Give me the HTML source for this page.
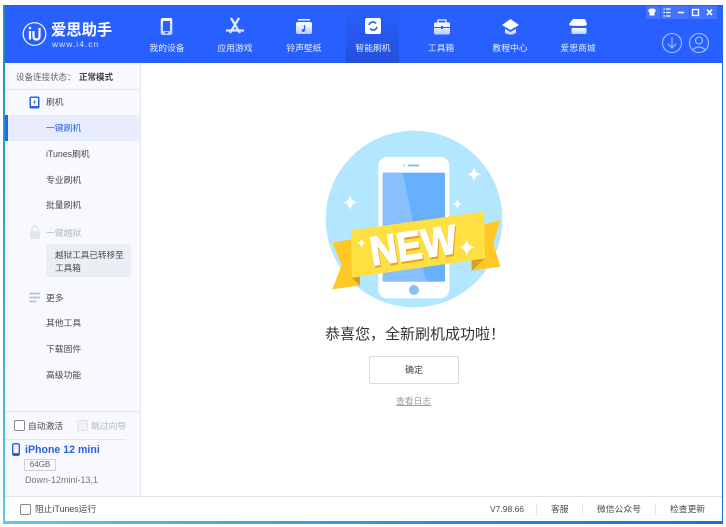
<!DOCTYPE html>
<html lang="zh-CN"><head><meta charset="utf-8"><title>爱思助手</title>
<style>
*{box-sizing:border-box;margin:0;padding:0}
html,body{width:726px;height:527px;overflow:hidden;background:#fff}
body{position:relative;font-family:"Liberation Sans","Noto Sans CJK SC",sans-serif;color:#4a4a4a;filter:blur(.3px)}
.a{position:absolute}
.t{position:absolute;white-space:nowrap;font-size:8.800px;line-height:12px}
.n{position:absolute;top:42px;width:70px;text-align:center;color:#e6edff;font-size:8.800px;line-height:12px}
.c{position:absolute;top:6px;width:14px;height:13px;background:rgba(255,255,255,.13)}
.cb{position:absolute;width:11px;height:11px;border:1px solid #8a8a8a;border-radius:2px;background:#fff}
svg{position:absolute;overflow:visible}
</style></head><body>
<div class="a" style="left:3px;top:5px;width:2px;height:519px;background:linear-gradient(#1690c0,#3aa9d6 60%,#66c8e0)"></div>
<div class="a" style="left:3px;top:521px;width:720px;height:3px;background:linear-gradient(90deg,#66c8e0,#2a8fd0 60%,#1a72d8)"></div>
<div class="a" style="left:722px;top:63px;width:1px;height:460px;background:#1a72d8"></div>

<div class="a" style="left:5px;top:5px;width:718px;height:58px;background:#2860ff"></div>
<div class="a" style="left:346px;top:5px;width:53px;height:58px;background:linear-gradient(#2860ff,#2350dc)"></div>

<svg style="left:0;top:0" width="726" height="64" viewBox="0 0 726 64">
<defs><linearGradient id="g" x1="0" y1="0" x2="0" y2="1"><stop offset="0" stop-color="#fff"/><stop offset="1" stop-color="#b9ccff"/></linearGradient></defs>
<circle cx="34.500" cy="34" r="11.300" fill="none" stroke="#fff" stroke-width="1.200"/>
<path d="M30 31v8.500M33.500 31v5.500q0 3 3 3t3-3V28" fill="none" stroke="#fff" stroke-width="2.200"/>
<circle cx="30" cy="28" r="1.300" fill="#fff"/>
<!-- device -->
<rect x="160.700" y="18" width="11.600" height="17" rx="2" fill="url(#g)"/><rect x="163" y="21" width="7" height="10" fill="#2860ff"/><rect x="165" y="32" width="3" height="1.500" fill="#2860ff"/>
<!-- app -->
<path d="M231 18l9 15M239 18l-9 15M226 30.500h18" stroke="url(#g)" stroke-width="2.200" fill="none" gradientUnits="userSpaceOnUse"/>
<path d="M231 18l9 15M239 18l-9 15M226 30.500h18" stroke="#dfe7ff" stroke-width="2" fill="none"/>
<!-- music -->
<rect x="298" y="19" width="12" height="1.500" fill="#e8eeff"/><rect x="296" y="22" width="16" height="12" rx="2" fill="url(#g)"/><path d="M304.500 25v5.500" stroke="#2860ff" stroke-width="1.200"/><circle cx="303.300" cy="30.500" r="1.500" fill="#2860ff"/>
<!-- flash -->
<rect x="365" y="18" width="16" height="16" rx="2" fill="#fff"/><path d="M369 25a4 4 0 0 1 7-1.500M377 27a4 4 0 0 1-7 1.500" fill="none" stroke="#2a60e8" stroke-width="1.600"/>
<!-- tools -->
<path d="M438 23v-3h8v3" fill="none" stroke="#e8eeff" stroke-width="1.300"/><rect x="434" y="22.500" width="16" height="12" rx="1.500" fill="url(#g)"/><rect x="434" y="27" width="16" height="1" fill="#2860ff"/><rect x="441" y="26" width="2" height="3" fill="#2860ff"/>
<!-- edu -->
<path d="M502 25l8.500-6 8.500 6-8.500 5z" fill="#fff"/><path d="M505 29v4q5.500 3.500 11 0v-4l-5.500 3z" fill="url(#g)"/>
<!-- shop -->
<path d="M573 19h12l2 5q-1 2.500-3 1.500q-1.500 1-3 0q-1.500 1-3 0q-1.500 1-3 0q-1.500 1-3 0q-2 1-3-1.500z" fill="#fff"/><rect x="571.500" y="28" width="15" height="6" rx="1" fill="url(#g)"/>
<!-- window controls -->
<path d="M649 9.500l2-1h3l2 1v2.500h-1v3.500h-5V12h-1z" fill="#fff" transform="translate(-.5 0)"/>
<path d="M663.500 9h1.500M666 9h4.500M663.500 12.500h1.500M666 12.500h4.500M663.500 16h1.500M666 16h4.500" stroke="#fff" stroke-width="1.300"/>
<path d="M678 12.500h6" stroke="#fff" stroke-width="1.500"/>
<rect x="692.500" y="9.500" width="6" height="6" fill="none" stroke="#fff" stroke-width="1.300"/>
<path d="M707 9.500l5 5.500M712 9.500l-5 5.500" stroke="#fff" stroke-width="1.600"/>
<!-- round -->
<g fill="none" stroke="#a9c0ff" stroke-width="1.100"><circle cx="672" cy="43" r="9.500"/><path d="M672 37.500v10M668 44l4 4 4-4"/><circle cx="699" cy="43" r="9.500"/><circle cx="699" cy="40.500" r="3.500"/><path d="M692.500 50q6.500-6 13 0"/></g>
</svg>
<div class="c" style="left:646px"></div><div class="c" style="left:660.500px"></div><div class="c" style="left:675px"></div><div class="c" style="left:689.500px"></div><div class="c" style="left:704px;width:13px"></div>

<div class="t" style="left:51px;top:22px;font-size:15.300px;line-height:18px;font-weight:700;color:#fff">爱思助手</div>
<div class="t" style="left:52px;top:39px;font-size:8.500px;line-height:10px;color:#dbe5ff;letter-spacing:1px">www.i4.cn</div>
<div class="n" style="left:132px">我的设备</div><div class="n" style="left:200px">应用游戏</div><div class="n" style="left:269px">铃声壁纸</div><div class="n" style="left:338px">智能刷机</div><div class="n" style="left:406px">工具箱</div><div class="n" style="left:475px">教程中心</div><div class="n" style="left:543px">爱思商城</div>

<div class="a" style="left:5px;top:63px;width:136px;height:433px;background:#f7f9ff;border-right:1px solid #e6e8ec"></div>
<div class="a" style="left:5px;top:89px;width:135px;height:1px;background:#e4e6ea"></div>
<div class="t" style="left:16px;top:71px;font-size:8.500px;color:#666">设备连接状态：</div>
<div class="t" style="left:79px;top:71px;font-size:8.500px;font-weight:700;color:#444">正常模式</div>

<svg style="left:29px;top:96px" width="12" height="13" viewBox="0 0 12 13"><rect x=".5" y=".5" width="10" height="12" rx="1.500" fill="#2860e8"/><rect x="2" y="2" width="7" height="8" fill="#fff"/><path d="M6 3L4 6.500h1.500L5 9l2-3.500H5.500z" fill="#2860e8"/></svg>
<div class="t" style="left:46px;top:96px">刷机</div>
<div class="a" style="left:5px;top:115px;width:135px;height:26px;background:#e7edfd"></div>
<div class="a" style="left:5px;top:115px;width:3px;height:26px;background:#2860ff"></div>
<div class="t" style="left:46px;top:122px;color:#2860e8">一键刷机</div>
<div class="t" style="left:46px;top:148px">iTunes刷机</div>
<div class="t" style="left:46px;top:174px">专业刷机</div>
<div class="t" style="left:46px;top:199px">批量刷机</div>
<svg style="left:29px;top:225px" width="12" height="15" viewBox="0 0 12 15"><path d="M3 6V4a3 3 0 0 1 6 0v2" fill="none" stroke="#e2e5ee" stroke-width="1.500"/><rect x="1" y="6" width="10" height="8" rx="1.500" fill="#e2e5ee"/></svg>
<div class="t" style="left:46px;top:227px;color:#b5b8c0">一键越狱</div>
<div class="a" style="left:46px;top:244px;width:85px;height:33px;background:#ebeef4;border-radius:2px"></div>
<div class="t" style="left:55px;top:249px;line-height:12.500px;white-space:normal;width:72px;font-size:8.600px">越狱工具已转移至工具箱</div>
<svg style="left:29px;top:292px" width="12" height="11" viewBox="0 0 12 11"><path d="M.5 1.500h10.500M.5 5.500h10.500M.5 9.500h7" stroke="#b9bfd2" stroke-width="1.700"/></svg>
<div class="t" style="left:46px;top:292px">更多</div>
<div class="t" style="left:46px;top:317px">其他工具</div>
<div class="t" style="left:46px;top:343px">下载固件</div>
<div class="t" style="left:46px;top:369px">高级功能</div>

<div class="a" style="left:5px;top:411px;width:135px;height:1px;background:#e4e6ea"></div>
<div class="cb" style="left:14px;top:420px"></div>
<div class="t" style="left:28px;top:420px">自动激活</div>
<div class="cb" style="left:77px;top:420px;border-color:#dfe1e6;background:#f0f1f4"></div>
<div class="t" style="left:91px;top:420px;color:#b5b8c0">跳过向导</div>
<div class="a" style="left:5px;top:439px;width:121px;height:1px;background:#e4e6ea"></div>
<svg style="left:12px;top:443px" width="8" height="13" viewBox="0 0 8 13"><rect x=".7" y=".7" width="6.600" height="11.600" rx="1.500" fill="none" stroke="#2860e8" stroke-width="1.400"/><rect x="1" y="10" width="6" height="2" fill="#2860e8"/></svg>
<div class="t" style="left:25px;top:443px;font-size:10.600px;line-height:14px;font-weight:700;color:#2860e8">iPhone 12 mini</div>
<div class="a" style="left:24px;top:459px;width:32px;height:12px;border:1px solid #cfd2d8;background:#f7f9ff;text-align:center;font-size:8px;line-height:10px;color:#666">64GB</div>
<div class="t" style="left:25px;top:474px;color:#777;font-size:9px">Down-12mini-13,1</div>

<div class="a" style="left:5px;top:496px;width:717px;height:1px;background:#e0e2e6"></div>
<div class="cb" style="left:20px;top:504px"></div>
<div class="t" style="left:35px;top:503px">阻止iTunes运行</div>
<div class="t" style="left:490px;top:503px;font-size:8.500px">V7.98.66</div>
<div class="t" style="left:551px;top:503px">客服</div>
<div class="t" style="left:597px;top:503px">微信公众号</div>
<div class="t" style="left:670px;top:503px">检查更新</div>
<div class="a" style="left:536px;top:503px;width:1px;height:12px;background:#e2e4e8"></div>
<div class="a" style="left:582px;top:503px;width:1px;height:12px;background:#e2e4e8"></div>
<div class="a" style="left:655px;top:503px;width:1px;height:12px;background:#e2e4e8"></div>

<svg style="left:315px;top:125px" width="200" height="190" viewBox="0 0 600 570">
<circle cx="297" cy="282" r="265" fill="#b3e6ff"/>
<rect x="190" y="96" width="213" height="424" rx="26" fill="#fff"/>
<rect x="203" y="143" width="187" height="327" fill="#66b0ff"/>
<path d="M203 143h60l70 327H203z" fill="#88c0ff"/>
<rect x="278" y="119" width="35" height="5" rx="2.500" fill="#7cb8f5"/><circle cx="268" cy="121.500" r="2.500" fill="#7cb8f5"/>
<circle cx="297" cy="495" r="15" fill="#8cc0f5"/>
<path d="M510 297l46-12-21 70 21 70-86 12v-40z" fill="#ffc824"/>
<path d="M108 343l-56 9 28 68-28 73 83-12z" fill="#ffc824"/>
<path d="M470 405l40-5-40 37z" fill="#d99f24"/><path d="M110 458l25-3v27z" fill="#d99f24"/>
<path d="M108 316L507 260l3 140-400 58z" fill="#ffe043"/>
<g font-family="Liberation Sans,sans-serif" font-weight="700" font-size="122" transform="translate(172 422) rotate(-8.600)">
<text x="2" y="6" textLength="262" lengthAdjust="spacingAndGlyphs" fill="#e5a020" stroke="#e5a020" stroke-width="4">NEW</text>
<text x="0" y="0" textLength="262" lengthAdjust="spacingAndGlyphs" fill="#fff" stroke="#fff" stroke-width="4">NEW</text>
</g>
<g fill="#fff">
<path d="M105 210q3 19 22 22q-19 3-22 25q-3-22-22-25q19-3 22-22z"/>
<path d="M477 125q3 20 20 23q-17 3-20 24q-3-21-20-24q17-3 20-23z"/>
<path d="M427 222q2 13 14 15q-12 2-14 16q-2-14-14-16q12-2 14-15z"/>
<path d="M140 340q2 12 13 14q-11 2-13 15q-2-13-13-15q11-2 13-14z"/>
<path d="M455 342q3 22 24 25q-21 3-24 27q-3-24-24-27q21-3 24-25z"/>
</g>
</svg>

<div class="t" style="left:325px;top:325px;font-size:15px;line-height:20px;color:#333">恭喜您，全新刷机成功啦！</div>
<div class="a" style="left:369px;top:356px;width:90px;height:28px;border:1px solid #dcdcdc;border-radius:2px;background:#fff;text-align:center;font-size:9px;line-height:27px;color:#444">确定</div>
<div class="t" style="left:396px;top:395px;color:#a0a0a0;text-decoration:underline">查看日志</div>
</body></html>
